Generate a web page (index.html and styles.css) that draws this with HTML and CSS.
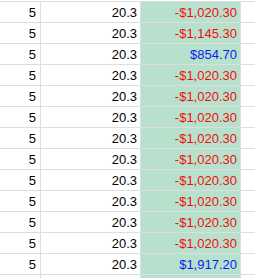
FILE: index.html
```html
<!DOCTYPE html>
<html>
<head>
<meta charset="utf-8">
<link rel="stylesheet" href="styles.css">
</head>
<body>
<div class="sheet">
  <div class="row"><div class="cell a">5</div><div class="cell b">20.3</div><div class="cell c neg">-$1,020.30</div><div class="cell d"></div></div>
  <div class="row"><div class="cell a">5</div><div class="cell b">20.3</div><div class="cell c neg">-$1,145.30</div><div class="cell d"></div></div>
  <div class="row"><div class="cell a">5</div><div class="cell b">20.3</div><div class="cell c pos">$854.70</div><div class="cell d"></div></div>
  <div class="row"><div class="cell a">5</div><div class="cell b">20.3</div><div class="cell c neg">-$1,020.30</div><div class="cell d"></div></div>
  <div class="row"><div class="cell a">5</div><div class="cell b">20.3</div><div class="cell c neg">-$1,020.30</div><div class="cell d"></div></div>
  <div class="row"><div class="cell a">5</div><div class="cell b">20.3</div><div class="cell c neg">-$1,020.30</div><div class="cell d"></div></div>
  <div class="row"><div class="cell a">5</div><div class="cell b">20.3</div><div class="cell c neg">-$1,020.30</div><div class="cell d"></div></div>
  <div class="row"><div class="cell a">5</div><div class="cell b">20.3</div><div class="cell c neg">-$1,020.30</div><div class="cell d"></div></div>
  <div class="row"><div class="cell a">5</div><div class="cell b">20.3</div><div class="cell c neg">-$1,020.30</div><div class="cell d"></div></div>
  <div class="row"><div class="cell a">5</div><div class="cell b">20.3</div><div class="cell c neg">-$1,020.30</div><div class="cell d"></div></div>
  <div class="row"><div class="cell a">5</div><div class="cell b">20.3</div><div class="cell c neg">-$1,020.30</div><div class="cell d"></div></div>
  <div class="row"><div class="cell a">5</div><div class="cell b">20.3</div><div class="cell c neg">-$1,020.30</div><div class="cell d"></div></div>
  <div class="row"><div class="cell a">5</div><div class="cell b">20.3</div><div class="cell c pos">$1,917.20</div><div class="cell d"></div></div>
  <div class="row"><div class="cell a"></div><div class="cell b"></div><div class="cell c"></div><div class="cell d"></div></div>
</div>
</body>
</html>
```

FILE: styles.css
```css
html, body {
  margin: 0;
  padding: 0;
  background: #ffffff;
}
.sheet {
  height: 278px;
  overflow: hidden;
  padding-top: 1px;
  box-sizing: border-box;
  font-family: "Liberation Sans", Arial, sans-serif;
  font-size: 13px;
  color: #000000;
}
.row {
  display: grid;
  grid-template-columns: 41px 100px 100px 1fr;
  border-top: 1px solid #dedede;
  height: 20px;
}
.cell {
  display: flex;
  align-items: flex-end;
  justify-content: flex-end;
  padding: 0 3px 2px 0;
  line-height: 15px;
  border-right: 1px solid #dedede;
  white-space: nowrap;
}
.a { padding-right: 4px; }
.c { background: #b7e1cd; }
.d { border-right: none; }
.neg { color: #f20d0d; }
.pos { color: #0a1ef0; }
```
